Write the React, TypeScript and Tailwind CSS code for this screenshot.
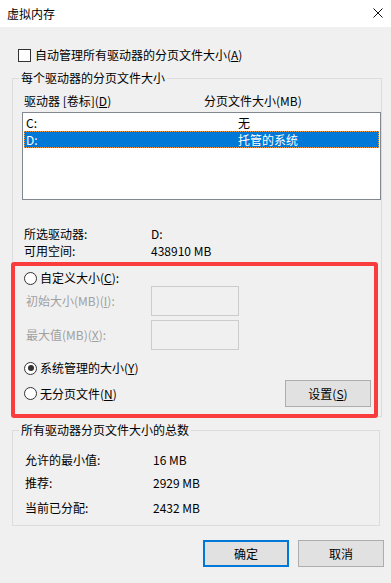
import React from "react";

function Radio({ checked }: { checked?: boolean }) {
  return (
    <span className="flex h-[13px] w-[13px] shrink-0 items-center justify-center rounded-full border border-[#333333] bg-white">
      {checked && <span className="h-[6px] w-[6px] rounded-full bg-[#333333]" />}
    </span>
  );
}

function WinButton({ label, primary }: { label: React.ReactNode; primary?: boolean }) {
  return (
    <button
      className={
        "flex h-[27px] w-[86px] items-center justify-center bg-[#e1e1e1] text-[12px] leading-[14px] text-black " +
        (primary ? "border-2 border-[#0078d7]" : "border border-[#adadad]")
      }
    >
      {label}
    </button>
  );
}

const drives = [
  { name: "C:", size: "无", selected: false },
  { name: "D:", size: "托管的系统", selected: true },
];

const totals = [
  { label: "允许的最小值:", value: "16 MB", mt: "mt-0" },
  { label: "推荐:", value: "2929 MB", mt: "mt-[6px]" },
  { label: "当前已分配:", value: "2432 MB", mt: "mt-[8px]" },
];

export default function App() {
  return (
    <div className="flex h-[583px] w-[391px] flex-col bg-[#f0f0f0] font-['Noto_Sans_CJK_SC',sans-serif] text-[12px] leading-[14px] text-black">
      {/* title bar */}
      <div className="flex h-[27px] shrink-0 items-center justify-between bg-white pl-[7px] pr-[8px]">
        <span className="text-[12px] leading-[14px]">虚拟内存</span>
        <svg width="10" height="10" viewBox="0 0 10 10" className="mb-[2px]">
          <path d="M0.5 0.5 L9.5 9.5 M9.5 0.5 L0.5 9.5" stroke="#111" strokeWidth="1" />
        </svg>
      </div>

      {/* auto manage */}
      <div className="ml-[18px] mt-[21px] flex h-[14px] items-center">
        <span className="h-[13px] w-[13px] border border-[#333333] bg-white" />
        <span className="ml-[4px]">
          自动管理所有驱动器的分页文件大小(<u>A</u>)
        </span>
      </div>

      {/* per-drive group */}
      <fieldset className="ml-[12px] mt-[9px] w-[368px] border border-[#dcdcdc] pb-0">
        <legend className="ml-[6px] px-[2px] leading-[14px]">每个驱动器的分页文件大小</legend>
        <div className="flex pl-[11px] pt-[9px]">
          <span className="w-[180px]">
            驱动器 [卷标](<u>D</u>)
          </span>
          <span>分页文件大小(MB)</span>
        </div>

        <div className="ml-[9px] mt-[4px] h-[88px] w-[359px] border border-[#828790] bg-white px-[1px] pt-[1px]">
          {drives.map((d) => (
            <div
              key={d.name}
              className={
                "flex h-[17px] items-center " +
                (d.selected
                  ? "border border-dotted border-[#f59a3a] bg-[#0078d7] text-white"
                  : "border border-transparent")
              }
            >
              <span className="w-[213px] pl-[1px]">{d.name}</span>
              <span>{d.size}</span>
            </div>
          ))}
        </div>

        <div className="mt-[25px] flex flex-col pl-[11px]">
          <div className="flex h-[17px] items-center">
            <span className="w-[127px]">所选驱动器:</span>
            <span>D:</span>
          </div>
          <div className="flex h-[17px] items-center">
            <span className="w-[127px]">可用空间:</span>
            <span>438910 MB</span>
          </div>
        </div>

        {/* highlighted area */}
        <div className="relative -mb-[2px] -ml-[2px] mt-[3px] w-[367px] rounded-[3px] border-4 border-[#fa3c3c] pb-[7px] pl-[9px] pr-[3px] pt-[5px]">
          <div className="flex h-[14px] items-center">
            <Radio />
            <span className="ml-[3px]">
              自定义大小(<u>C</u>):
            </span>
          </div>
          <div className="mt-[1px] flex items-center pl-[2px] text-[#a0a0a0]">
            <span className="w-[125px]">
              初始大小(MB)(<u>I</u>):
            </span>
            <span className="h-[30px] w-[88px] border border-[#cccccc] bg-[#f0f0f0]" />
          </div>
          <div className="mt-[4px] flex items-center pl-[2px] text-[#a0a0a0]">
            <span className="w-[125px]">
              最大值(MB)(<u>X</u>):
            </span>
            <span className="h-[30px] w-[88px] border border-[#cccccc] bg-[#f0f0f0]" />
          </div>
          <div className="mt-[11px] flex h-[14px] items-center">
            <Radio checked />
            <span className="ml-[3px]">
              系统管理的大小(<u>Y</u>)
            </span>
          </div>
          <div className="mt-[5px] flex h-[27px] items-center justify-between">
            <div className="flex items-center">
              <Radio />
              <span className="ml-[3px]">
                无分页文件(<u>N</u>)
              </span>
            </div>
            <button className="flex h-[27px] w-[86px] items-center justify-center border border-[#adadad] bg-[#e1e1e1]">
              设置(<u>S</u>)
            </button>
          </div>
        </div>
      </fieldset>

      {/* totals group */}
      <fieldset className="ml-[12px] mt-[6px] w-[368px] border border-[#dcdcdc] pb-[9px] pl-[12px]">
        <legend className="-ml-[6px] px-[2px] leading-[14px]">所有驱动器分页文件大小的总数</legend>
        <div className="flex flex-col pt-[14px]">
          {totals.map((t) => (
            <div key={t.label} className={"flex h-[17px] items-center " + t.mt}>
              <span className="w-[128px]">{t.label}</span>
              <span>{t.value}</span>
            </div>
          ))}
        </div>
      </fieldset>

      <div className="mt-[14px] flex justify-end gap-[9px] pr-[7px]">
        <WinButton label="确定" primary />
        <WinButton label="取消" />
      </div>
    </div>
  );
}
